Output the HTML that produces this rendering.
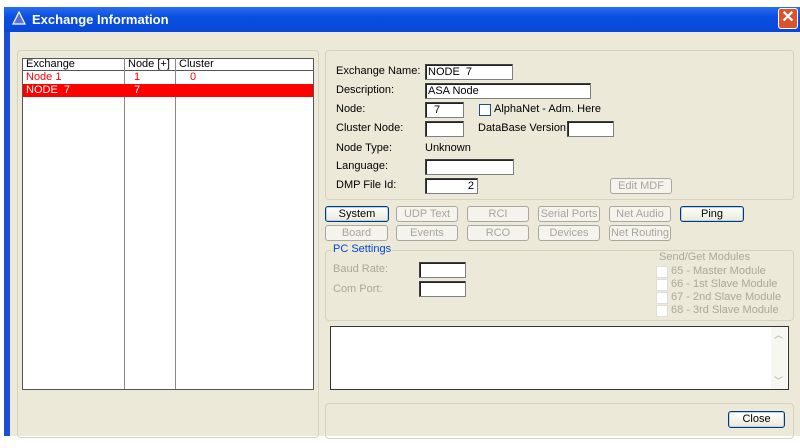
<!DOCTYPE html>
<html><head><meta charset="utf-8"><style>
*{box-sizing:border-box;margin:0;padding:0}
body{width:800px;height:448px;background:#fff;position:relative;overflow:hidden;font-family:"Liberation Sans",sans-serif;font-size:11px;color:#000}
.a{position:absolute}
.win{left:4px;top:7px;width:796px;height:429px;background:#ece9d8;border-left:6px solid #1d4fd6}
.title{left:4px;top:7px;width:796px;height:25px;background:linear-gradient(#2a6cf0,#0a4fe0 40%,#0848d8);color:#fff;font-weight:bold;font-size:13px;line-height:25px;padding-left:28px}
.grp{border:1px solid #d6d2c0;border-radius:4px}
.tb{background:#fff;border:1px solid #7f7f7f;border-top-color:#404040;border-left-color:#404040;box-shadow:inset 1px 1px 0 #222}
.btn{border:1px solid #aaa6a0;border-radius:3px;background:#f4f3ee;color:#a8a69a;text-align:center;line-height:14px;font-size:11px;height:16px}
.btn.on{border-color:#003c74;color:#000;background:linear-gradient(#fff,#ece9d8);box-shadow:inset 0 0 0 1px #b8d0f0}
.dis{color:#aca899}
.cb{width:12px;height:12px;background:#fff;border:1px solid #ddd}
</style></head><body>
<div class="a win"></div>
<div class="a title">Exchange Information</div>
<svg class="a" style="left:12px;top:11px" width="14" height="14"><polygon points="7,1 13,13 1,13" fill="#5870d8" stroke="#fff" stroke-width="1.2"/></svg>
<div class="a" style="left:778px;top:8px;width:20px;height:21px;background:#d9532c;border:1px solid #fff;border-radius:3px;color:#fff;font-weight:bold;font-size:16px;line-height:18px;text-align:center">✕</div>

<div class="a grp" style="left:17px;top:50px;width:302px;height:388px"></div>
<div class="a" style="left:22px;top:58px;width:292px;height:332px;background:#fff;border:1px solid #555"></div>
<div class="a" style="left:23px;top:58px;width:290px;height:13px;border-bottom:1px solid #555"></div>
<div class="a" style="left:124px;top:58px;width:1px;height:331px;background:#888"></div>
<div class="a" style="left:175px;top:58px;width:1px;height:331px;background:#888"></div>
<div class="a" style="left:26px;top:58px;line-height:13px">Exchange</div>
<div class="a" style="left:128px;top:58px;line-height:13px">Node [+]</div>
<div class="a" style="left:179px;top:58px;line-height:13px">Cluster</div>
<div class="a" style="left:26px;top:71px;line-height:13px;color:#f00">Node 1</div>
<div class="a" style="left:134px;top:71px;line-height:13px;color:#f00">1</div>
<div class="a" style="left:190px;top:71px;line-height:13px;color:#f00">0</div>
<div class="a" style="left:23px;top:84px;width:290px;height:13px;background:#f00"></div>
<div class="a" style="left:26px;top:84px;line-height:13px;color:#fff">NODE &nbsp;7</div>
<div class="a" style="left:134px;top:84px;line-height:13px;color:#fff">7</div>

<div class="a grp" style="left:325px;top:50px;width:469px;height:150px"></div>
<div class="a" style="left:336px;top:65px">Exchange Name:</div>
<div class="a tb" style="left:425px;top:64px;width:88px;height:16px;padding:1px 2px">NODE &nbsp;7</div>
<div class="a" style="left:336px;top:84px">Description:</div>
<div class="a tb" style="left:425px;top:83px;width:166px;height:16px;padding:1px 2px">ASA Node</div>
<div class="a" style="left:336px;top:103px">Node:</div>
<div class="a tb" style="left:425px;top:102px;width:39px;height:16px;padding:1px 8px">7</div>
<div class="a cb" style="left:479px;top:104px;border-color:#1c5180"></div>
<div class="a" style="left:494px;top:103px">AlphaNet - Adm. Here</div>
<div class="a" style="left:336px;top:122px">Cluster Node:</div>
<div class="a tb" style="left:425px;top:121px;width:39px;height:16px"></div>
<div class="a" style="left:478px;top:122px">DataBase Version:</div>
<div class="a tb" style="left:567px;top:121px;width:47px;height:16px"></div>
<div class="a" style="left:336px;top:142px">Node Type:</div>
<div class="a" style="left:425px;top:142px">Unknown</div>
<div class="a" style="left:336px;top:160px">Language:</div>
<div class="a tb" style="left:425px;top:159px;width:89px;height:16px"></div>
<div class="a" style="left:336px;top:179px">DMP File Id:</div>
<div class="a tb" style="left:425px;top:178px;width:53px;height:16px;text-align:right;padding:1px 3px">2</div>
<div class="a btn" style="left:610px;top:178px;width:62px">Edit MDF</div>

<div class="a btn on" style="left:325px;top:206px;width:64px">System</div>
<div class="a btn" style="left:396px;top:206px;width:62px">UDP Text</div>
<div class="a btn" style="left:467px;top:206px;width:62px">RCI</div>
<div class="a btn" style="left:538px;top:206px;width:62px">Serial Ports</div>
<div class="a btn" style="left:609px;top:206px;width:62px">Net Audio</div>
<div class="a btn on" style="left:680px;top:206px;width:64px">Ping</div>
<div class="a btn" style="left:325px;top:225px;width:63px">Board</div>
<div class="a btn" style="left:396px;top:225px;width:62px">Events</div>
<div class="a btn" style="left:467px;top:225px;width:62px">RCO</div>
<div class="a btn" style="left:538px;top:225px;width:62px">Devices</div>
<div class="a btn" style="left:609px;top:225px;width:62px">Net Routing</div>

<div class="a grp" style="left:325px;top:250px;width:469px;height:71px"></div>
<div class="a" style="left:332px;top:243px;color:#0046d5;background:#ece9d8;padding:0 1px">PC Settings</div>
<div class="a dis" style="left:333px;top:263px">Baud Rate:</div>
<div class="a tb" style="left:419px;top:262px;width:47px;height:16px"></div>
<div class="a dis" style="left:333px;top:283px">Com Port:</div>
<div class="a tb" style="left:419px;top:281px;width:47px;height:16px"></div>
<div class="a dis" style="left:659px;top:251px">Send/Get Modules</div>
<div class="a cb" style="left:656px;top:266px"></div><div class="a dis" style="left:671px;top:265px">65 - Master Module</div>
<div class="a cb" style="left:656px;top:279px"></div><div class="a dis" style="left:671px;top:278px">66 - 1st Slave Module</div>
<div class="a cb" style="left:656px;top:292px"></div><div class="a dis" style="left:671px;top:291px">67 - 2nd Slave Module</div>
<div class="a cb" style="left:656px;top:305px"></div><div class="a dis" style="left:671px;top:304px">68 - 3rd Slave Module</div>

<div class="a" style="left:330px;top:326px;width:459px;height:64px;background:#fff;border:1px solid #333"></div>
<div class="a" style="left:771px;top:327px;width:16px;height:62px;background:#f7f7f2"></div>
<div class="a dis" style="left:774px;top:328px;font-size:9px">︿</div>
<div class="a dis" style="left:774px;top:374px;font-size:9px">﹀</div>

<div class="a grp" style="left:325px;top:403px;width:469px;height:36px"></div>
<div class="a btn on" style="left:728px;top:411px;width:57px;height:17px">Close</div>
</body></html>
